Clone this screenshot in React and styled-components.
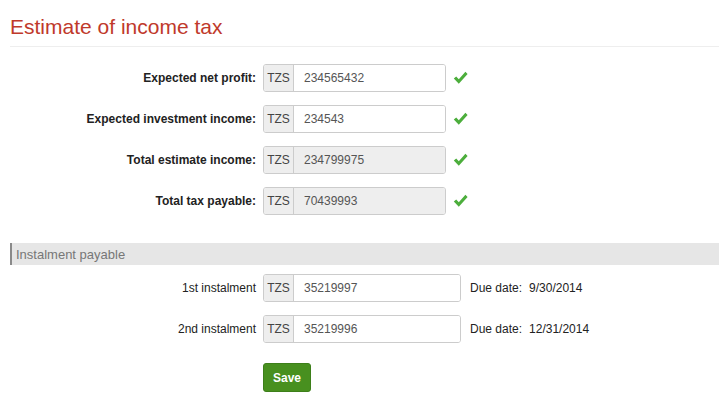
import React from "react";
import styled, { createGlobalStyle } from "styled-components";

const GlobalStyle = createGlobalStyle`
  body {
    margin: 0;
    background: #fff;
    font-family: "Liberation Sans", Arial, sans-serif;
    color: #333;
  }
`;

const Page = styled.div`
  padding: 0 0 0 10px;
  width: 709px;
`;

const Title = styled.h1`
  margin: 0;
  padding: 15px 0 7px;
  font-size: 21px;
  font-weight: normal;
  line-height: 24px;
  color: #c0392b;
  border-bottom: 1px solid #eee;
`;

const Form = styled.div`
  padding-top: 17px;
`;

const Row = styled.div`
  display: flex;
  align-items: center;
  height: 28px;
  margin-bottom: 13px;
`;

const Label = styled.label`
  width: 246px;
  margin-right: 7px;
  text-align: right;
  font-size: 12px;
  font-weight: ${(p) => (p.$bold ? "bold" : "normal")};
  color: #222;
`;

const InputGroup = styled.div`
  display: flex;
  width: ${(p) => p.$width}px;
  height: 28px;
  box-sizing: border-box;
  border: 1px solid #ccc;
  border-radius: 3px;
  overflow: hidden;
`;

const Addon = styled.span`
  width: 29px;
  flex: none;
  display: flex;
  align-items: center;
  justify-content: center;
  background: #eee;
  border-right: 1px solid #ccc;
  font-size: 12px;
  color: #444;
`;

const Input = styled.input`
  flex: 1;
  min-width: 0;
  border: none;
  outline: none;
  padding: 0 0 0 10px;
  font-family: inherit;
  font-size: 12px;
  color: #555;
  background: ${(p) => (p.readOnly ? "#eee" : "#fff")};
`;

const Check = styled.svg`
  margin-left: 7px;
  width: 15px;
  height: 14px;
`;

const SectionHeader = styled.div`
  margin-top: 28px;
  margin-bottom: 9px;
  height: 22px;
  display: flex;
  align-items: center;
  padding-left: 4px;
  background: #e6e6e6;
  border-left: 2px solid #8a8a8a;
  font-size: 13px;
  color: #777;
`;

const DueDate = styled.div`
  display: flex;
  gap: 7px;
  margin-left: 9px;
  font-size: 12px;
  color: #222;
`;

const Actions = styled.div`
  padding: 7px 0 0 253px;
`;

const SaveButton = styled.button`
  width: 48px;
  height: 29px;
  border: 1px solid #3d7f1a;
  border-radius: 3px;
  background: #48901f;
  color: #fff;
  font-family: inherit;
  font-size: 12px;
  font-weight: bold;
  cursor: pointer;
`;

const CheckIcon = () => (
  <Check viewBox="0 0 15 14">
    <path d="M0.8 7.6 L3.2 5.4 L5.8 8.2 L12.4 0.8 L14.6 3 L5.8 12.8 Z" fill="#4cae3c" />
  </Check>
);

const taxRows = [
  { label: "Expected net profit:", value: "234565432" },
  { label: "Expected investment income:", value: "234543" },
  { label: "Total estimate income:", value: "234799975", readOnly: true },
  { label: "Total tax payable:", value: "70439993", readOnly: true },
];

const instalments = [
  { label: "1st instalment", value: "35219997", due: "9/30/2014" },
  { label: "2nd instalment", value: "35219996", due: "12/31/2014" },
];

export default function App() {
  return (
    <Page>
      <GlobalStyle />
      <Title>Estimate of income tax</Title>
      <Form>
        {taxRows.map((r) => (
          <Row key={r.label}>
            <Label $bold>{r.label}</Label>
            <InputGroup $width={183}>
              <Addon>TZS</Addon>
              <Input defaultValue={r.value} readOnly={r.readOnly} />
            </InputGroup>
            <CheckIcon />
          </Row>
        ))}
        <SectionHeader>Instalment payable</SectionHeader>
        {instalments.map((r) => (
          <Row key={r.label}>
            <Label>{r.label}</Label>
            <InputGroup $width={198}>
              <Addon>TZS</Addon>
              <Input defaultValue={r.value} />
            </InputGroup>
            <DueDate>
              <span>Due date:</span>
              <span>{r.due}</span>
            </DueDate>
          </Row>
        ))}
        <Actions>
          <SaveButton>Save</SaveButton>
        </Actions>
      </Form>
    </Page>
  );
}
